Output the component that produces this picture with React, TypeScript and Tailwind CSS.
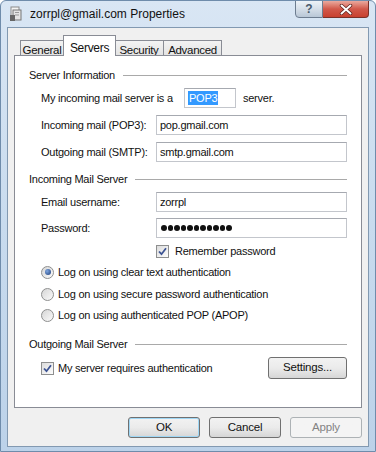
import React from "react";

const font = "font-['Liberation_Sans',Arial,sans-serif]";

function Tab({ label, active, w }: { label: string; active?: boolean; w: string }) {
  if (active) {
    return (
      <div
        className={`relative z-10 -mb-px h-[21px] ${w} -mx-[1px] border border-b-0 border-[#898c95] bg-white flex items-start justify-center pt-[3px] text-[12px] tracking-[-0.3px] text-[#111]`}
      >
        {label}
      </div>
    );
  }
  return (
    <div
      className={`h-[15px] ${w} border border-b-0 border-[#898c95] bg-linear-to-b from-[#f3f3f3] to-[#e3e3e3] flex items-start justify-center pt-[1px] text-[11.5px] tracking-[-0.3px] text-[#111] -ml-px first:ml-0`}
    >
      {label}
    </div>
  );
}

function Header({ text }: { text: string }) {
  return (
    <div className="flex items-center h-[14px] text-[11px] tracking-[-0.25px] text-[#111]">
      <span>{text}</span>
      <div className="flex-1 ml-[8px] h-px bg-[#a9a9a9]" />
    </div>
  );
}

function Input({ value, cls }: { value?: React.ReactNode; cls?: string }) {
  return (
    <div
      className={`h-[20px] border border-[#c3c6cc] border-t-[#a6a9b0] bg-white flex items-center pl-[3px] text-[11px] tracking-[-0.25px] text-[#111] ${cls ?? ""}`}
    >
      {value}
    </div>
  );
}

function Check() {
  return (
    <div className="w-[13px] h-[13px] border border-[#8e8f8f] bg-linear-to-br from-[#dcdcdc] to-[#fdfdfd] flex items-center justify-center shrink-0">
      <svg width="9" height="9" viewBox="0 0 9 9">
        <path d="M1 4.5 L3.5 7.2 L8 1.2" stroke="#3d5493" strokeWidth="1.8" fill="none" />
      </svg>
    </div>
  );
}

function Radio({ on }: { on?: boolean }) {
  return (
    <div className="w-[13px] h-[13px] rounded-full border border-[#8e8f8f] bg-linear-to-br from-[#d6d6d6] to-[#fbfbfb] flex items-center justify-center shrink-0">
      {on && <div className="w-[6px] h-[6px] rounded-full bg-[radial-gradient(circle_at_35%_35%,#7fa6e0,#1c3d78)]" />}
    </div>
  );
}

function Button({ children, cls }: { children: React.ReactNode; cls?: string }) {
  return (
    <div
      className={`h-[21px] rounded-[3px] border border-[#707070] bg-linear-to-b from-[#f2f2f2] via-[#ebebeb] to-[#d6d6d6] flex items-center justify-center text-[11.5px] tracking-[-0.2px] text-[#111] ${cls ?? ""}`}
    >
      {children}
    </div>
  );
}

export default function App() {
  return (
    <div className={`w-[376px] h-[452px] ${font} bg-linear-to-b from-[#d9e6f4] via-[#c8dbee] to-[#bcd2e9] border border-[#6f8cab] rounded-t-[6px] flex flex-col overflow-hidden`}>
      {/* Title bar */}
      <div className="h-[26px] flex items-start shrink-0">
        <div className="flex items-center h-[26px] pl-[8px]">
          <svg width="16" height="16" viewBox="0 0 16 16">
            <rect x="2" y="1" width="8" height="11" fill="#f4f4f4" stroke="#8a8a8a" />
            <rect x="4" y="4" width="8" height="10" fill="#e4e4e4" stroke="#777" />
            <rect x="1" y="9" width="5" height="6" fill="#666" />
            <line x1="6" y1="6.5" x2="10" y2="6.5" stroke="#999" />
            <line x1="6" y1="9" x2="10" y2="9" stroke="#999" />
          </svg>
          <span className="ml-[5px] text-[12px] text-[#111]">zorrpl@gmail.com Properties</span>
        </div>
        <div className="flex-1" />
        <div className="flex mr-[6px] -mt-px">
          <div className="w-[28px] h-[18px] rounded-bl-[4px] border border-[#6d7d90] bg-linear-to-b from-[#edf2f7] via-[#d5dee8] to-[#b9c7d6] flex items-center justify-center text-[12px] font-bold text-[#4a5a6c]">
            ?
          </div>
          <div className="w-[46px] h-[18px] rounded-br-[4px] border border-l-0 border-[#7a3028] bg-linear-to-b from-[#e9a99e] via-[#d1584a] to-[#c8402f] flex items-center justify-center">
            <svg width="14" height="11" viewBox="0 0 14 11">
              <path d="M2.5 1.5 L11.5 9.5 M11.5 1.5 L2.5 9.5" stroke="#5b1f1a" strokeWidth="3.4" strokeLinecap="round" />
              <path d="M2.5 1.5 L11.5 9.5 M11.5 1.5 L2.5 9.5" stroke="#ffffff" strokeWidth="2" strokeLinecap="round" />
            </svg>
          </div>
        </div>
      </div>

      {/* Client */}
      <div className="mx-[6px] mb-[4px] flex-1 border border-[#8299b1] bg-[#f0f0f0] flex flex-col">
        <div className="pt-[7px] pl-[12px] flex items-end h-[27px]">
          <Tab label="General" w="w-[44px]" />
          <Tab label="Servers" active w="w-[53px]" />
          <Tab label="Security" w="w-[50px]" />
          <Tab label="Advanced" w="w-[59px]" />
        </div>

        <div className="ml-[6px] mr-[6px] h-[353px] border border-[#898c95] bg-white px-[14px] flex flex-col">
          <div className="mt-[12px]">
            <Header text="Server Information" />
          </div>

          <div className="mt-[6px] ml-[12px] flex items-center h-[20px] text-[11px] tracking-[-0.25px] text-[#111]">
            <span className="w-[143px]">My incoming mail server is a</span>
            <Input
              cls="w-[52px] pl-[2px]"
              value={<span className="bg-[#3399ff] text-white px-[1px] leading-[14px]">POP3</span>}
            />
            <span className="ml-[7px]">server.</span>
          </div>

          <div className="mt-[7px] ml-[12px] flex items-center h-[20px] text-[11px] tracking-[-0.25px] text-[#111]">
            <span className="w-[115px]">Incoming mail (POP3):</span>
            <Input cls="flex-1" value="pop.gmail.com" />
          </div>

          <div className="mt-[7px] ml-[12px] flex items-center h-[20px] text-[11px] tracking-[-0.25px] text-[#111]">
            <span className="w-[115px]">Outgoing mail (SMTP):</span>
            <Input cls="flex-1" value="smtp.gmail.com" />
          </div>

          <div className="mt-[10px]">
            <Header text="Incoming Mail Server" />
          </div>

          <div className="mt-[6px] ml-[12px] flex items-center h-[20px] text-[11px] tracking-[-0.25px] text-[#111]">
            <span className="w-[115px]">Email username:</span>
            <Input cls="flex-1" value="zorrpl" />
          </div>

          <div className="mt-[6px] ml-[12px] flex items-center h-[20px] text-[11px] tracking-[-0.25px] text-[#111]">
            <span className="w-[115px]">Password:</span>
            <Input
              cls="flex-1"
              value={
                <div className="flex gap-[1px] ml-[1px]">
                  {Array.from({ length: 11 }).map((_, i) => (
                    <div key={i} className="w-[5.5px] h-[5.5px] rounded-full bg-[#111]" />
                  ))}
                </div>
              }
            />
          </div>

          <div className="mt-[6px] ml-[127px] flex items-center h-[14px] text-[11px] tracking-[-0.25px] text-[#111]">
            <Check />
            <span className="ml-[6px]">Remember password</span>
          </div>

          <div className="mt-[7px] ml-[12px] flex items-center h-[14px] text-[11px] tracking-[-0.25px] text-[#111]">
            <Radio on />
            <span className="ml-[4px]">Log on using clear text authentication</span>
          </div>
          <div className="mt-[8px] ml-[12px] flex items-center h-[14px] text-[11px] tracking-[-0.25px] text-[#111]">
            <Radio />
            <span className="ml-[4px]">Log on using secure password authentication</span>
          </div>
          <div className="mt-[7px] ml-[12px] flex items-center h-[14px] text-[11px] tracking-[-0.25px] text-[#111]">
            <Radio />
            <span className="ml-[4px]">Log on using authenticated POP (APOP)</span>
          </div>

          <div className="mt-[15px]">
            <Header text="Outgoing Mail Server" />
          </div>

          <div className="mt-[6px] ml-[12px] flex items-center h-[22px] text-[11px] tracking-[-0.25px] text-[#111]">
            <Check />
            <span className="ml-[4px]">My server requires authentication</span>
            <div className="flex-1" />
            <Button cls="w-[79px] h-[22px]">Settings...</Button>
          </div>
        </div>

        <div className="mt-[9px] mr-[6px] flex justify-end gap-[9px]">
          <Button cls="w-[72px] border-[#3c7fb1] shadow-[inset_0_0_0_1px_#9fd7f5]">OK</Button>
          <Button cls="w-[72px]">Cancel</Button>
          <Button cls="w-[72px] border-[#adb2b5] from-[#f4f4f4] via-[#f4f4f4] to-[#f4f4f4] text-[#838383]">Apply</Button>
        </div>
      </div>
    </div>
  );
}
